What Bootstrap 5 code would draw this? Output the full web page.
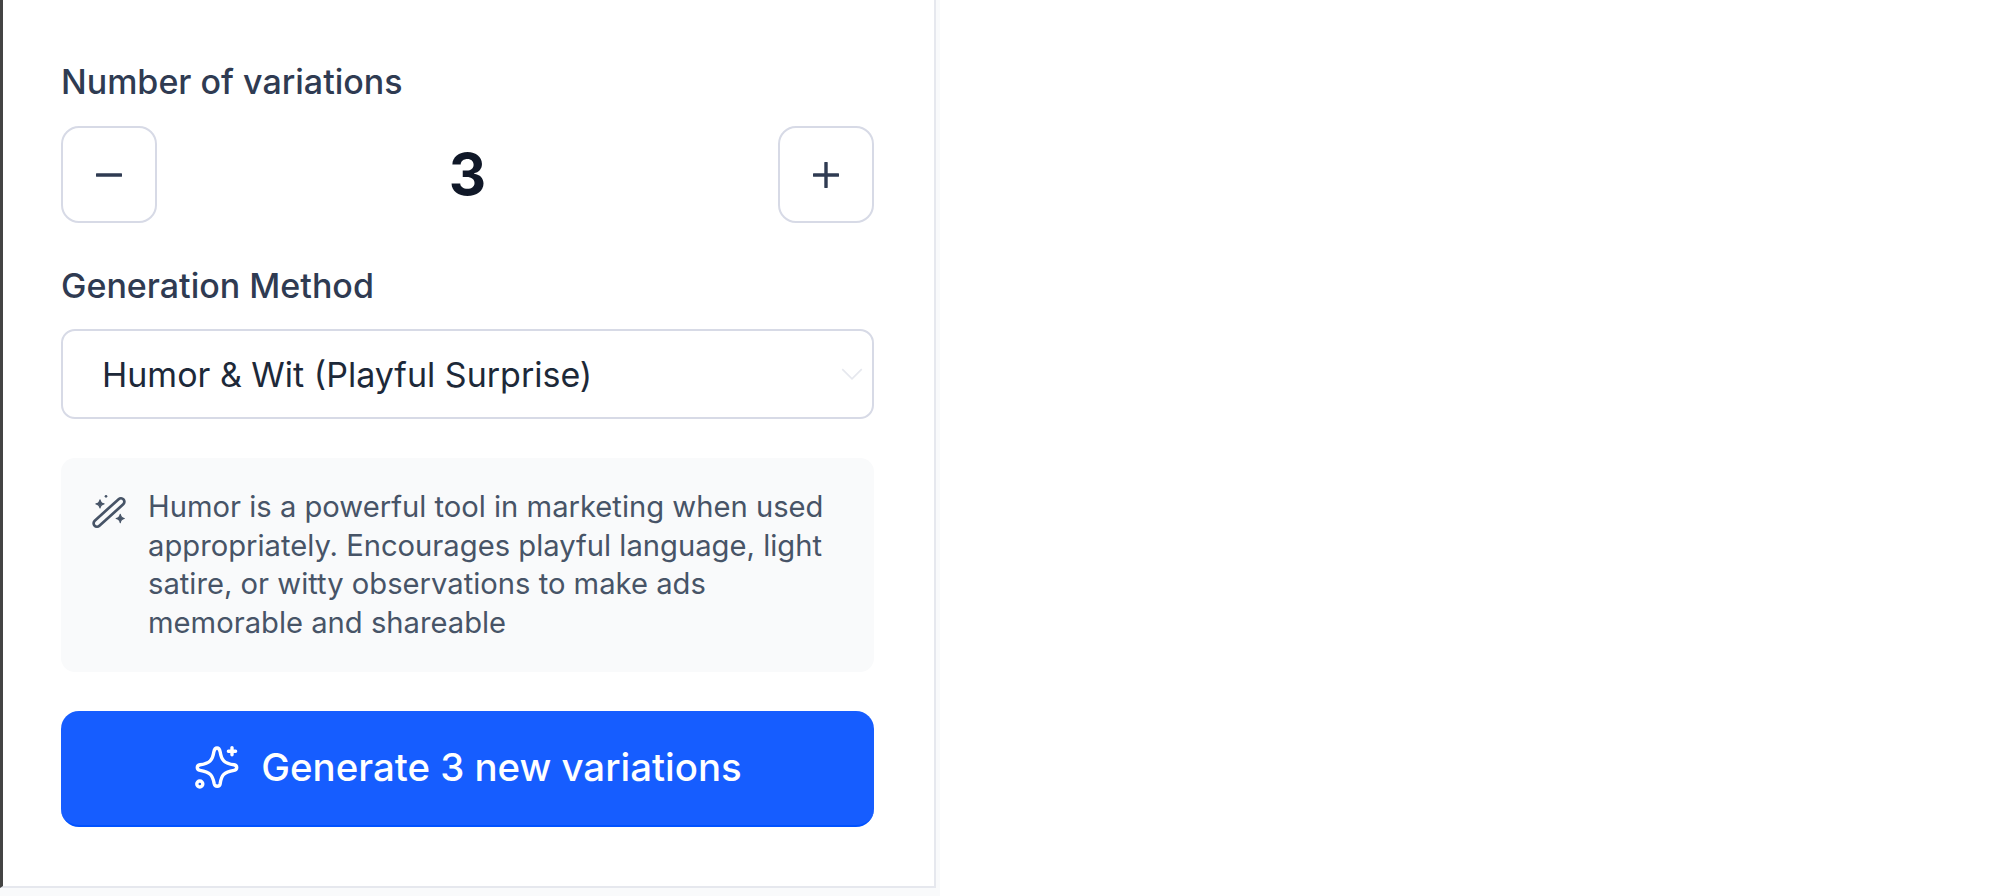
<!DOCTYPE html>
<html lang="en">
<head>
  <meta charset="UTF-8" />
  <meta name="viewport" content="width=device-width, initial-scale=1.0" />
  <title>Generate variations</title>
  <link href="https://cdn.jsdelivr.net/npm/bootstrap@5.3.0/dist/css/bootstrap.min.css" rel="stylesheet">
  <style>
    html, body { height: 100%; }
    body { font-family: Inter, "Liberation Sans", sans-serif; background: #fff; overflow: hidden; }
    .side-wrap { width: 940px; height: 896px; background: #f9fafb; }
    .side-panel { width: 936px; height: 888px; background: #fff; border-left: 3px solid #444; border-right: 2px solid #e6e8ee; border-bottom: 2px solid #e6e8ee; padding: 64px 60px 0 58px; }
    .field-label { font-size: 34px; line-height: 36px; font-weight: 500; color: #2f3b52; margin-bottom: 0; display: block; }
    .step-btn { width: 96px; height: 97px; padding: 0; background: #fff; border: 2px solid #d7dae6; border-radius: 18px; color: #2f3b52; }
    .step-value { font-size: 58px; line-height: 1; font-weight: 700; color: #101828; position: relative; top: -1px; }
    .stepper-row { margin-top: 26px; margin-bottom: 45px; }
    .method-select { height: 90px; margin-top: 25px; font-family: inherit; font-size: 34px; color: #1d2939; padding: 0 39px; border: 2px solid #d7dae6; border-radius: 14px; background-image: url("data:image/svg+xml,%3csvg xmlns='http://www.w3.org/2000/svg' viewBox='0 0 20 12'%3e%3cpath fill='none' stroke='%23e6e8ee' stroke-width='1.5' d='M1 1l9 9 9-9'/%3e%3c/svg%3e"); background-position: right 9px center; background-size: 22px 13px; }
    .hint-box { margin-top: 39px; height: 214px; background: #f9fafb; border-radius: 14px; padding: 30px 20px 0 30px; gap: 21px; }
    .hint-box svg { flex: none; width: 36px; height: 36px; margin-top: 5px; }
    .hint-text { font-size: 29.2px; line-height: 38.6px; color: #475467; margin: 0; }
    .generate-btn { margin-top: 39px; width: 100%; height: 116px; background: #165dff; border: 0; border-bottom: 2px solid #0052ff; border-radius: 18px; color: #fff; font-size: 38.4px; font-weight: 500; gap: 20px; }
    .generate-btn:hover { background: #165dff; color: #fff; }
    .generate-btn svg { width: 48px; height: 48px; }
  </style>
</head>
<body>
  <div class="side-wrap">
    <div class="side-panel">
      <label class="field-label">Number of variations</label>
      <div class="stepper-row d-flex align-items-center justify-content-between">
        <button type="button" class="step-btn btn d-flex align-items-center justify-content-center" aria-label="Decrease">
          <svg width="26" height="26" viewBox="0 0 26 26" fill="none" stroke="currentColor" stroke-width="3.400" stroke-linecap="round"><path d="M1 13h24"/></svg>
        </button>
        <span class="step-value">3</span>
        <button type="button" class="step-btn btn d-flex align-items-center justify-content-center" aria-label="Increase">
          <svg width="26" height="26" viewBox="0 0 26 26" fill="none" stroke="currentColor" stroke-width="3.400" stroke-linecap="round"><path d="M1 13h24M13 1v24"/></svg>
        </button>
      </div>

      <label class="field-label">Generation Method</label>
      <select class="method-select form-select">
        <option>Humor &amp; Wit (Playful Surprise)</option>
      </select>

      <div class="hint-box d-flex align-items-start">
        <svg viewBox="0 0 24 24" fill="none" stroke="#475467" stroke-width="1.800" stroke-linecap="round" stroke-linejoin="round">
          <rect x="-13" y="-2.300" width="26" height="4.600" rx="2.300" transform="translate(12 13) rotate(-42)"/>
          <path d="M6 4.500c.3 1.800.9 2.400 2.700 2.700C6.900 7.500 6.300 8.100 6 9.900 5.700 8.100 5.100 7.500 3.300 7.200 5.100 6.900 5.700 6.300 6 4.500z" fill="#475467" stroke-width=".8"/>
          <path d="M19.500 14.300c.3 1.800.9 2.400 2.700 2.700-1.800.3-2.400.9-2.700 2.700-.3-1.800-.9-2.400-2.700-2.700 1.800-.3 2.400-.9 2.700-2.700z" fill="#475467" stroke-width=".8"/>
          <circle cx="10" cy="2.200" r=".9" fill="#475467" stroke="none"/>
        </svg>
        <p class="hint-text">Humor is a powerful tool in marketing when used appropriately. Encourages playful language, light satire, or witty observations to make ads memorable and shareable</p>
      </div>

      <button type="button" class="generate-btn btn d-flex align-items-center justify-content-center">
        <svg viewBox="0 0 24 24" fill="none" stroke="#fff" stroke-width="1.700" stroke-linecap="round" stroke-linejoin="round">
          <path d="M12 2C13 2 13.400 3 13.600 4 14.200 8 15.500 9.700 20.500 10.400 22.300 10.700 22.300 12.900 20.500 13.200 15.500 14 14.200 15.500 13.600 19.800 13.300 21.600 11 21.600 10.600 19.800 9.800 15.500 8.500 14 3.500 13.200 1.700 12.900 1.700 10.700 3.500 10.400 8.500 9.700 9.800 8 10.400 4 10.600 3 11 2 12 2Z"/>
          <path d="M19.500 1.800v3.600M17.700 3.600h3.600"/>
          <circle cx="3.400" cy="20" r="1.500"/>
        </svg>
        Generate 3 new variations
      </button>
    </div>
  </div>
</body>
</html>
